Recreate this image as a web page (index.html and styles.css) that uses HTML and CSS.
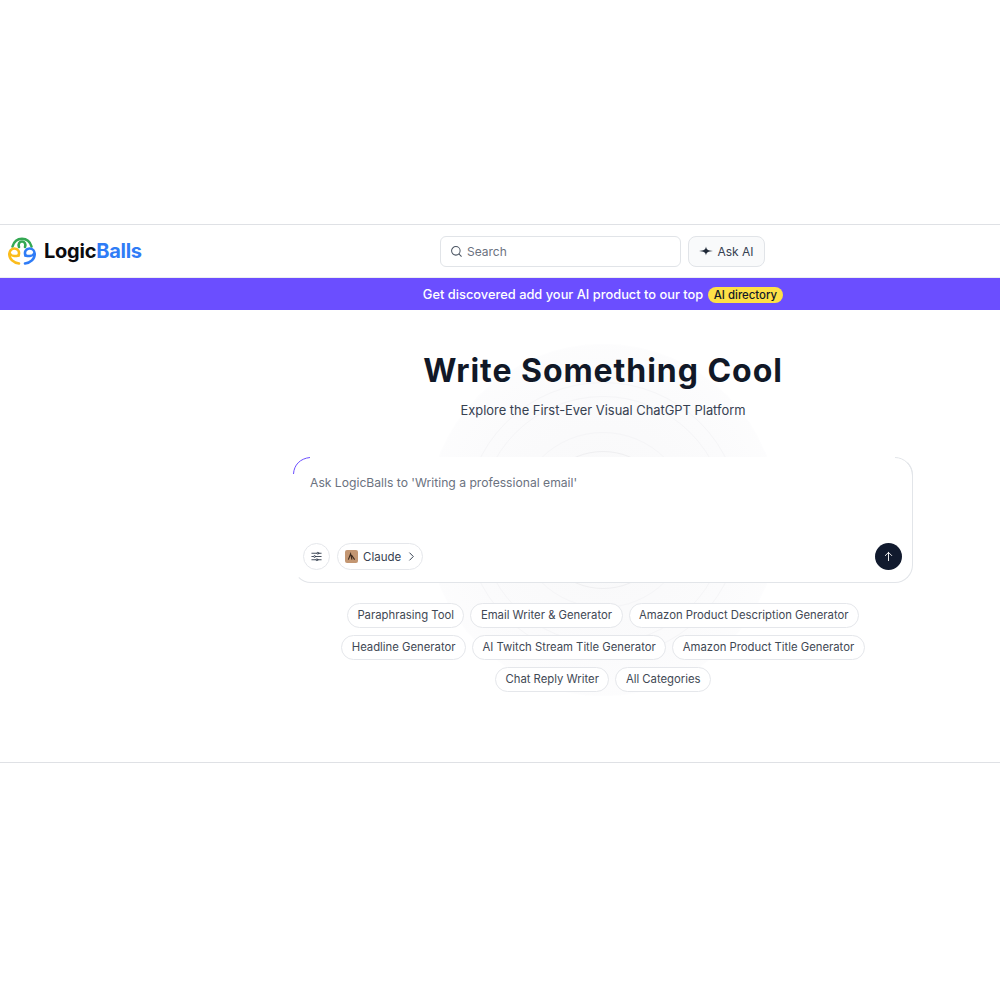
FILE: index.html
```html
<!DOCTYPE html>
<html>
    <head>
        <title>LogicBalls</title>
        <link rel="stylesheet" href="styles.css">
    </head>
    <body>
        <div class="page">
            <header class="topbar">
                <a class="logo">
                    <svg class="logo-mark" viewBox="0 0 28 28" width="28" height="28" fill="none" stroke-width="2.600" stroke-linecap="round">
                        <path stroke="#34a853" d="M4.500 9.500C6 4.500 9.500 1.800 14 1.800s8 2.700 9.500 7.700"/>
                        <path stroke="#34a853" d="M11 10C9.800 7 11.500 4.500 14 4.500s4.200 2.500 3 5.500"/>
                        <path stroke="#fbbc1c" d="M10.500 18.500C12 15 10 11.500 6.500 11.500 3.500 11.500 1.300 13.800 1.300 17 1.300 22 5.500 26 11 26.500"/>
                        <path stroke="#fbbc1c" d="M1.800 16.500C3 19 7 19.500 10.500 18.500"/>
                        <path stroke="#2f7cf6" d="M17.500 18.500C16 15 18 11.500 21.500 11.500c3 0 5.200 2.300 5.200 5.500 0 5-4.200 9-9.700 9.500"/>
                        <path stroke="#2f7cf6" d="M26.200 16.500C25 19 21 19.500 17.500 18.500"/>
                    </svg>
                    <span class="logo-text">Logic<span class="logo-blue">Balls</span></span>
                </a>
                <div class="topbar-tools">
                    <div class="search">
                        <svg viewBox="0 0 14 14" width="13" height="13" fill="none" stroke="#4b5563" stroke-width="1.100" stroke-linecap="round">
                            <circle cx="6.300" cy="6.300" r="4.600"/>
                            <path d="M9.800 9.800l2.400 2.400"/>
                        </svg>
                        <span>Search</span>
                    </div>
                    <button class="ask-btn">
                        <svg viewBox="0 0 14 14" width="14" height="14">
                            <path fill="#1f2937" d="M7 2.500C7.400 5.500 9 6.600 14 7 9 7.400 7.400 8.500 7 11.500 6.600 8.500 5 7.400 0 7 5 6.600 6.600 5.500 7 2.500z"/>
                        </svg>
                        Ask AI
                    </button>
                </div>
            </header>

            <div class="banner">
                <div class="banner-inner">
                    Get discovered add your AI product to our top
                    <span class="banner-pill">AI directory</span>
                </div>
            </div>

            <main class="hero">
                <div class="rings">
                    <div class="ring ring-1"></div>
                    <div class="ring ring-2"></div>
                    <div class="ring ring-3"></div>
                    <div class="ring ring-4"></div>
                    <div class="ring ring-5"></div>
                </div>
                <h1 class="hero-title">Write Something Cool</h1>
                <p class="hero-sub">Explore the First-Ever Visual ChatGPT Platform</p>

                <div class="prompt-card">
                    <svg class="card-arc" viewBox="0 0 20 20" width="20" height="20" fill="none">
                        <path stroke="#6b4eff" stroke-width="1" d="M.5 17C1 8 7 1.500 17 .5"/>
                    </svg>
                    <svg class="card-corner" viewBox="0 0 20 20" width="20" height="20" fill="none">
                        <path stroke="#e2e5e9" stroke-width="1" d="M2 .5C11 .5 19.500 8 19.500 19"/>
                    </svg>
                    <div class="prompt-text">Ask LogicBalls to 'Writing a professional email'</div>
                    <div class="prompt-actions">
                        <button class="tune-btn">
                            <svg viewBox="0 0 14 14" width="13" height="13" fill="none" stroke="#374151" stroke-width="1" stroke-linecap="round">
                                <path d="M2 3.500h10M2 7h10M2 10.500h10"/>
                                <circle cx="8.500" cy="3.500" r="1" fill="#fff"/>
                                <circle cx="5" cy="7" r="1" fill="#fff"/>
                                <circle cx="7.500" cy="10.500" r="1" fill="#fff"/>
                            </svg>
                        </button>
                        <button class="model-btn">
                            <span class="model-icon">
                                <svg viewBox="0 0 10 10" width="9" height="9" fill="none" stroke="#3b2a1e" stroke-width="1.200">
                                    <path d="M1.500 8.500L4 2l1.500 6.500M5 3.500l3.500 5"/>
                                </svg>
                            </span>
                            Claude
                            <svg class="model-chevron" viewBox="0 0 10 10" width="9" height="9" fill="none" stroke="#374151" stroke-width="1.100" stroke-linecap="round" stroke-linejoin="round">
                                <path d="M3 1l4 4-4 4"/>
                            </svg>
                        </button>
                        <button class="send-btn">
                            <svg viewBox="0 0 12 12" width="11" height="11" fill="none" stroke="#fff" stroke-width="1" stroke-linecap="round" stroke-linejoin="round">
                                <path d="M6 10.500v-9M2.500 5L6 1.500 9.500 5"/>
                            </svg>
                        </button>
                    </div>
                </div>

                <div class="chips">
                    <span class="chip">Paraphrasing Tool</span>
                    <span class="chip">Email Writer &amp; Generator</span>
                    <span class="chip">Amazon Product Description Generator</span>
                    <span class="chip">Headline Generator</span>
                    <span class="chip">AI Twitch Stream Title Generator</span>
                    <span class="chip">Amazon Product Title Generator</span>
                    <span class="chip">Chat Reply Writer</span>
                    <span class="chip">All Categories</span>
                </div>
            </main>
        </div>
    </body>
</html>
```

FILE: styles.css
```css
body{
    margin: 0;
    background-color: white;
    font-family: Inter, "Liberation Sans", sans-serif;
    color: #111827;
}
button{
    font-family: inherit;
    cursor: pointer;
}
.page{
    padding-top: 224px;
}
.topbar{
    display: grid;
    grid-template-columns: 205px 1fr;
    align-items: center;
    height: 52px;
    border-top: 1px solid #dfe1e5;
    border-bottom: 1px solid #eceef1;
}
.logo{
    display: flex;
    align-items: center;
    gap: 8px;
    padding-left: 8px;
}
.logo-text{
    font-size: 20px;
    font-weight: 700;
    letter-spacing: -0.25px;
    color: #0b0b0f;
}
.logo-blue{
    color: #2f7cf6;
}
.topbar-tools{
    display: flex;
    justify-content: center;
    gap: 7px;
}
.search{
    display: flex;
    align-items: center;
    gap: 4px;
    box-sizing: border-box;
    width: 241px;
    height: 31px;
    padding-left: 9px;
    border: 1px solid #e1e4e8;
    border-radius: 6px;
    font-size: 12px;
    color: #6b7280;
}
.ask-btn{
    display: flex;
    align-items: center;
    justify-content: center;
    gap: 4px;
    box-sizing: border-box;
    width: 77px;
    height: 31px;
    padding: 0;
    border: 1px solid #e1e4e8;
    border-radius: 8px;
    background-color: #f9fafb;
    font-size: 12px;
    color: #374151;
}
.banner{
    display: grid;
    grid-template-columns: 206px 1fr;
    height: 32px;
    align-items: center;
    background-color: #6b4eff;
}
.banner-inner{
    grid-column: 2;
    padding-top: 1px;
    text-align: center;
    font-size: 12.85px;
    font-weight: 500;
    color: white;
}
.banner-pill{
    display: inline-block;
    margin-left: 1px;
    padding: 1px 6px;
    border-radius: 9px;
    background-color: #fde047;
    font-size: 11.4px;
    color: #111827;
}
.hero{
    position: relative;
    box-sizing: border-box;
    height: 453px;
    padding: 42px 87px 0 293px;
    border-bottom: 1px solid #dfe1e5;
    overflow: hidden;
}
.rings{
    position: absolute;
    left: 603px;
    top: 210px;
}
.ring{
    position: absolute;
    border: 1px solid #f5f5f7;
    border-radius: 50%;
    transform: translate(-50%, -50%);
}
.ring-1{
    width: 136px;
    height: 136px;
    border-color: #efeff1;
}
.ring-2{
    width: 174px;
    height: 174px;
}
.ring-3{
    width: 246px;
    height: 246px;
}
.ring-4{
    width: 274px;
    height: 274px;
}
.ring-5{
    width: 350px;
    height: 350px;
    border-color: #fdfdfe;
    background: radial-gradient(circle, #f8f8f9 0%, #fbfbfc 55%, #ffffff 100%);
    z-index: -1;
}
.hero-title{
    position: relative;
    margin: 0;
    text-align: center;
    font-size: 32px;
    line-height: 38px;
    font-weight: 700;
    letter-spacing: 0.95px;
    color: #111827;
}
.hero-sub{
    position: relative;
    margin: 12px 0 0;
    text-align: center;
    font-size: 12.9px;
    line-height: 18px;
    color: #374151;
}
.prompt-card{
    position: relative;
    box-sizing: border-box;
    height: 126px;
    margin-top: 37px;
    padding: 16px 10px 11px 9px;
    border: 1px solid #e2e5e9;
    border-top-color: white;
    border-left-color: white;
    border-radius: 18px;
    background-color: white;
}
.card-arc{
    position: absolute;
    left: -1px;
    top: -1px;
}
.card-corner{
    position: absolute;
    right: -1px;
    top: -1px;
}
.prompt-text{
    padding-left: 7px;
    font-size: 12.15px;
    line-height: 18px;
    color: #6b7280;
}
.prompt-actions{
    display: flex;
    align-items: center;
    gap: 7px;
    margin-top: 51px;
}
.tune-btn{
    display: flex;
    align-items: center;
    justify-content: center;
    width: 27px;
    height: 27px;
    padding: 0;
    border: 1px solid #e5e7eb;
    border-radius: 50%;
    background-color: white;
}
.model-btn{
    display: flex;
    align-items: center;
    gap: 5px;
    box-sizing: border-box;
    height: 27px;
    padding: 0 6px 0 7px;
    border: 1px solid #e5e7eb;
    border-radius: 14px;
    background-color: white;
    font-size: 11.5px;
    color: #374151;
}
.model-icon{
    display: flex;
    align-items: center;
    justify-content: center;
    width: 13px;
    height: 13px;
    border-radius: 2px;
    background-color: #c39672;
}
.model-chevron{
    margin-left: 1px;
}
.send-btn{
    display: flex;
    align-items: center;
    justify-content: center;
    width: 27px;
    height: 27px;
    margin-left: auto;
    padding: 0;
    border: none;
    border-radius: 50%;
    background-color: #111a2e;
}
.chips{
    position: relative;
    display: flex;
    flex-wrap: wrap;
    justify-content: center;
    gap: 7px 6px;
    margin-top: 20px;
}
.chip{
    box-sizing: border-box;
    height: 25px;
    padding: 0 9.5px;
    border: 1px solid #e5e7eb;
    border-radius: 13px;
    background-color: white;
    font-size: 11.3px;
    line-height: 23px;
    color: #3f4854;
}
```
